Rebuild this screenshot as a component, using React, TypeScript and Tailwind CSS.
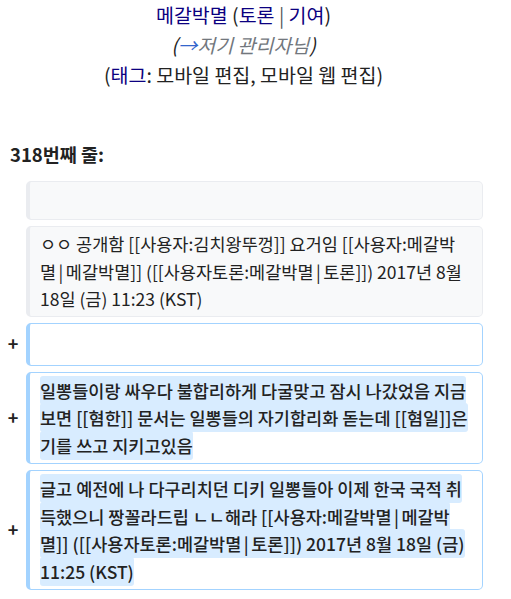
import { Fragment } from 'react'

// 파이프 문자 양옆 간격 보정
function Wiki({ text }: { text: string }) {
  const parts = text.split('|')
  return (
    <>
      {parts.map((p, i) => (
        <Fragment key={i}>
          {i > 0 && <span className="mx-[2.5px]">|</span>}
          {p}
        </Fragment>
      ))}
    </>
  )
}

export default function App() {
  const font = { fontFamily: '"Noto Sans CJK KR", "Noto Sans", sans-serif' }
  return (
    <div className="w-[511px] h-[599px] bg-white text-[#222222] overflow-hidden" style={font}>
      <div className="flex flex-col items-center pr-[24px] text-[19.5px] leading-[30px]">
        <div>
          <span className="text-[#0b0080]">메갈박멸</span>
          <span className="text-[#222222]"> (</span>
          <span className="text-[#0b0080]">토론</span>
          <span className="text-[#54595d]"> | </span>
          <span className="text-[#0b0080]">기여</span>
          <span>)</span>
        </div>
        <div className="italic text-[#72777d]">
          <span className="text-[#222222]">(</span>
          <span className="text-[#3366cc]">→</span>
          저기 관리자님
          <span className="text-[#222222]">)</span>
        </div>
        <div>
          (<span className="text-[#0b0080]">태그</span>: 모바일 편집, 모바일 웹 편집)
        </div>
      </div>

      <h3 className="mt-[51px] ml-[10px] text-[18.5px] font-bold leading-[26px]">318번째 줄:</h3>

      <div className="mt-[14px] flex flex-col gap-[6px] pr-[28px] text-[17.5px] leading-[27.5px]">
        <div className="flex items-center">
          <div className="w-[26px] shrink-0" />
          <div className="flex-1 h-[39px] rounded-[5px] border border-[#eaecf0] border-l-4 bg-[#f8f9fa]" />
        </div>
        <div className="flex items-center">
          <div className="w-[26px] shrink-0" />
          <div className="flex-1 rounded-[5px] border border-[#eaecf0] border-l-4 bg-[#f8f9fa] pl-[10px] pr-[6px] py-[3px] text-[#222222]">
            <Wiki text="ㅇㅇ 공개함 [[사용자:김치왕뚜껑]] 요거임 [[사용자:메갈박멸|메갈박멸]] ([[사용자토론:메갈박멸|토론]]) 2017년 8월 18일 (금) 11:23 (KST)" />
          </div>
        </div>
        <div className="flex items-center">
          <div className="w-[26px] shrink-0 text-center font-bold text-[18px]">+</div>
          <div className="flex-1 h-[43px] rounded-[5px] border border-[#a3d3ff] border-l-4 bg-white" />
        </div>
        <div className="flex items-center">
          <div className="w-[26px] shrink-0 text-center font-bold text-[18px]">+</div>
          <div className="flex-1 rounded-[5px] border border-[#a3d3ff] border-l-4 bg-white pl-[10px] pr-[6px] py-[4px] font-medium">
            <span className="bg-[#d8ecff] py-[2px] rounded-[3px] [box-decoration-break:clone]">
              일뽕들이랑 싸우다 불합리하게 다굴맞고 잠시 나갔었음 지금 보면 [[혐한]] 문서는 일뽕들의 자기합리화 돋는데 [[혐일]]은 기를 쓰고 지키고있음
            </span>
          </div>
        </div>
        <div className="flex items-center">
          <div className="w-[26px] shrink-0 text-center font-bold text-[18px]">+</div>
          <div className="flex-1 rounded-[5px] border border-[#a3d3ff] border-l-4 bg-white pl-[10px] pr-[6px] py-[4px] font-medium">
            <span className="bg-[#d8ecff] py-[2px] rounded-[3px] [box-decoration-break:clone]">
              <Wiki text="글고 예전에 나 다구리치던 디키 일뽕들아 이제 한국 국적 취득했으니 짱꼴라드립 ㄴㄴ해라 [[사용자:메갈박멸|메갈박멸]] ([[사용자토론:메갈박멸|토론]]) 2017년 8월 18일 (금) 11:25 (KST)" />
            </span>
          </div>
        </div>
      </div>
    </div>
  )
}
